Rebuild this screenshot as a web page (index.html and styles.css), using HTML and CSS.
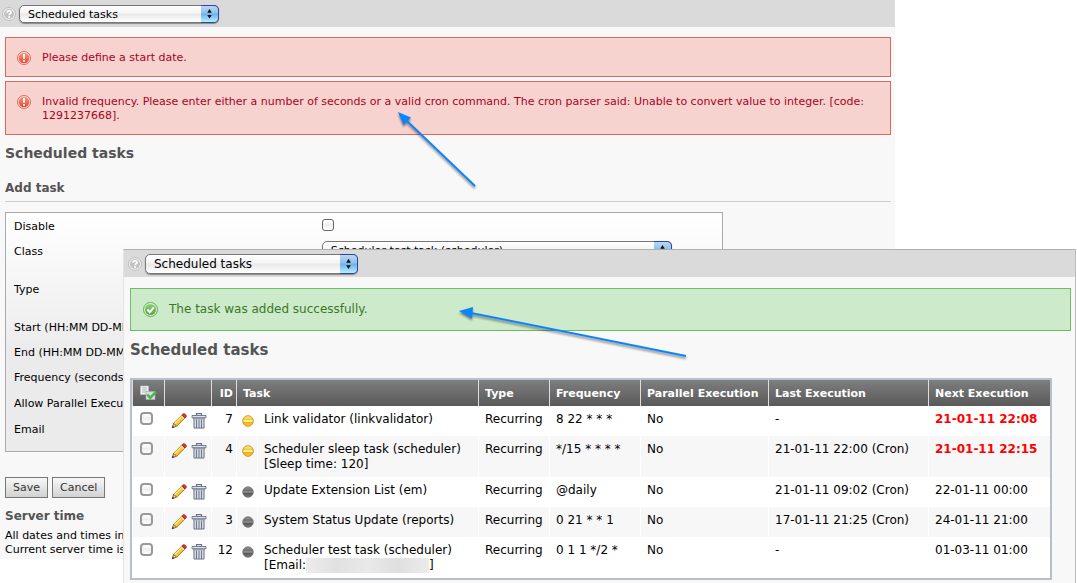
FILE: index.html
```html
<!DOCTYPE html>
<html lang="en">
<head>
<meta charset="utf-8">
<title>Scheduled tasks</title>
<link rel="stylesheet" href="styles.css">
</head>
<body>
<svg class="defs" width="0" height="0" aria-hidden="true">
  <defs>
    <linearGradient id="gRed" x1="0" y1="0" x2="0" y2="1"><stop offset="0" stop-color="#f59a86"/><stop offset="1" stop-color="#e04a34"/></linearGradient>
    <linearGradient id="gGreen" x1="0" y1="0" x2="0" y2="1"><stop offset="0" stop-color="#8fd07c"/><stop offset="1" stop-color="#4ea83c"/></linearGradient>
    <linearGradient id="gGold" x1="0" y1="0" x2="0" y2="1"><stop offset="0" stop-color="#fff08a"/><stop offset=".4" stop-color="#f6c52c"/><stop offset=".48" stop-color="#fff6c0"/><stop offset=".56" stop-color="#fff0a0"/><stop offset=".62" stop-color="#eeb010"/><stop offset="1" stop-color="#f8d232"/></linearGradient>
    <linearGradient id="gDark" x1="0" y1="0" x2="0" y2="1"><stop offset="0" stop-color="#8e8e8e"/><stop offset=".4" stop-color="#707070"/><stop offset=".5" stop-color="#a2a2a2"/><stop offset=".6" stop-color="#585858"/><stop offset="1" stop-color="#7a7a7a"/></linearGradient>
    <symbol id="help" viewBox="0 0 14 14"><circle cx="7" cy="7" r="6.4" fill="#f6f6f6" stroke="#b4b4b4" stroke-width=".9"/><circle cx="7" cy="7" r="5" fill="#c2c2c2"/><path d="M4.900 5.600C5 3.100 9.200 3.300 9 5.600 8.900 6.900 7.100 6.700 7.100 8.300" fill="none" stroke="#fff" stroke-width="1.700"/><circle cx="7.100" cy="10.100" r="1" fill="#fff"/></symbol>
    <symbol id="error" viewBox="0 0 14 14"><circle cx="7" cy="7" r="6.5" fill="#fbe3dd" stroke="#df5c48" stroke-width=".9"/><circle cx="7" cy="7" r="5.3" fill="url(#gRed)"/><path d="M6.1 3h1.8v4.7H6.1zM6.1 9h1.8v1.7H6.1z" fill="#fff"/></symbol>
    <symbol id="ok" viewBox="0 0 15 15"><circle cx="7.5" cy="7.5" r="7" fill="#e4f6de" stroke="#5aae48"/><circle cx="7.5" cy="7.5" r="5.6" fill="url(#gGreen)"/><path d="M4.3 7.5l2.5 2.7 4-4.9" fill="none" stroke="#fff" stroke-width="2"/></symbol>
    <symbol id="steps" viewBox="0 0 18 18"><path d="M9 3.4l2.5 4.2h-5zM9 14.2l2.5-4h-5z" fill="#111"/></symbol>
    <symbol id="pencil" viewBox="0 0 16 16"><path d="M1.2 14.8l1.5-4.6 2.9 3z" fill="#f2cfa0" stroke="#4c3414" stroke-width=".7"/><path d="M1.2 14.8l.6-2 1.3 1.4z" fill="#111"/><path d="M2.7 10.2L10.9 2l3.1 3-8.3 8.2z" fill="#f8c631" stroke="#96670c" stroke-width=".8"/><path d="M3.6 10.5l8-7.9" stroke="#ffec98" stroke-width="1.2"/><path d="M10 2.9l3.1 3" stroke="#e8e2d2" stroke-width="1.2"/><path d="M10.9 2l1.3-1.2c1.3-.8 3.8 1.4 3 3L14 5z" fill="#dd3828" stroke="#8f1c12" stroke-width=".7"/></symbol>
    <symbol id="trash" viewBox="0 0 16 16"><path d="M5.5 2.5V.7h5v1.8" fill="none" stroke="#697386" stroke-width="1.2"/><path d="M1 2.5h14v2.2H1z" fill="#dbe1ec" stroke="#697386" stroke-width=".9"/><path d="M2.5 6h11v9.3h-11z" fill="#d3d9e3"/><path d="M1.8 5.7h12.4" stroke="#697386" stroke-width=".8"/><path d="M3 6v9h10V6M5.5 6.5V15M8 6.5V15M10.5 6.5V15" fill="none" stroke="#70798c"/></symbol>
    <symbol id="gold" viewBox="0 0 12 12"><circle cx="6" cy="6" r="5.3" fill="url(#gGold)" stroke="#c88b12" stroke-width=".9"/></symbol>
    <symbol id="dark" viewBox="0 0 12 12"><circle cx="6" cy="6" r="5.3" fill="url(#gDark)" stroke="#686868" stroke-width=".7"/></symbol>
    <symbol id="select-all" viewBox="0 0 17 16"><path d="M.5 1h8v8.500h-8z" fill="#f3f5f7" stroke="#b9bfc6" stroke-width=".6"/><path d="M2 3h5M2 5h5M2 7h5" stroke="#9ba3ac" stroke-width=".8"/><path d="M6 6.500h9v8H6z" fill="#d5e2da" stroke="#a5adb3" stroke-width=".7"/><path d="M7.300 9.500l2.900 3.300 5.800-6" fill="none" stroke="#4fb34a" stroke-width="2.500"/></symbol>
  </defs>
</svg>

<main class="stage">
  <section class="window window-back">
    <header class="bar">
      <svg class="icon-help"><use href="#help"/></svg>
      <span class="picker"><select aria-label="Module"><option>Scheduled tasks</option></select><svg class="steps"><use href="#steps"/></svg></span>
    </header>
    <div class="content">
      <div class="messages">
        <div class="message error"><svg class="icon-msg"><use href="#error"/></svg><p>Please define a start date.</p></div>
        <div class="message error"><svg class="icon-msg"><use href="#error"/></svg><p>Invalid frequency. Please enter either a number of seconds or a valid cron command. The cron parser said: Unable to convert value to integer. [code: 1291237668].</p></div>
      </div>
      <h1>Scheduled tasks</h1>
      <h2 class="ruled">Add task</h2>
      <form class="task-form">
        <div class="field"><label for="disable">Disable</label><input class="tick" id="disable" type="checkbox"></div>
        <div class="field"><label for="class">Class</label><span class="picker wide"><select id="class"><option>Scheduler test task (scheduler)</option></select><svg class="steps"><use href="#steps"/></svg></span></div>
        <div class="field double"><span>Type</span></div>
        <div class="field"><span>Start (HH:MM DD-MM</span></div>
        <div class="field"><span>End (HH:MM DD-MM</span></div>
        <div class="field roomy"><span>Frequency (seconds</span></div>
        <div class="field roomy"><span>Allow Parallel Execu</span></div>
        <div class="field roomy"><span>Email</span></div>
      </form>
      <div class="actions"><button type="button">Save</button><button type="button">Cancel</button></div>
      <h2>Server time</h2>
      <p>All dates and times in<br>Current server time is</p>
    </div>
    <svg class="arrow arrow-error" viewBox="0 0 90 86"><path d="M15 15L83 80" stroke="#0a84ff" stroke-width="2"/><path d="M6 6l13 5.500-7.500 7.500z" fill="#0a84ff"/></svg>
  </section>

  <section class="window window-front">
    <header class="bar">
      <svg class="icon-help"><use href="#help"/></svg>
      <span class="picker"><select aria-label="Module"><option>Scheduled tasks</option></select><svg class="steps"><use href="#steps"/></svg></span>
    </header>
    <div class="content">
      <div class="message success"><svg class="icon-msg"><use href="#ok"/></svg><p>The task was added successfully.</p></div>
      <h1>Scheduled tasks</h1>
      <table class="tasks">
        <colgroup><col class="c-check"><col class="c-tools"><col class="c-id"><col class="c-state"><col><col class="c-type"><col class="c-freq"><col class="c-par"><col class="c-last"><col class="c-next"></colgroup>
        <thead>
          <tr><th class="mark"><svg class="icon-all"><use href="#select-all"/></svg></th><th></th><th class="num">ID</th><th colspan="2">Task</th><th>Type</th><th>Frequency</th><th>Parallel Execution</th><th>Last Execution</th><th>Next Execution</th></tr>
        </thead>
        <tbody>
          <tr><td class="mark"><input class="tick" type="checkbox" aria-label="Task 7"></td><td class="tools"><svg><use href="#pencil"/></svg><svg><use href="#trash"/></svg></td><td class="num">7</td><td class="state"><svg><use href="#gold"/></svg></td><td>Link validator (linkvalidator)</td><td>Recurring</td><td>8 22 * * *</td><td>No</td><td>-</td><td class="late">21-01-11 22:08</td></tr>
          <tr><td class="mark"><input class="tick" type="checkbox" aria-label="Task 4"></td><td class="tools"><svg><use href="#pencil"/></svg><svg><use href="#trash"/></svg></td><td class="num">4</td><td class="state"><svg><use href="#gold"/></svg></td><td>Scheduler sleep task (scheduler)<br>[Sleep time: 120]</td><td>Recurring</td><td>*/15 * * * *</td><td>No</td><td>21-01-11 22:00 (Cron)</td><td class="late">21-01-11 22:15</td></tr>
          <tr><td class="mark"><input class="tick" type="checkbox" aria-label="Task 2"></td><td class="tools"><svg><use href="#pencil"/></svg><svg><use href="#trash"/></svg></td><td class="num">2</td><td class="state"><svg><use href="#dark"/></svg></td><td>Update Extension List (em)</td><td>Recurring</td><td>@daily</td><td>No</td><td>21-01-11 09:02 (Cron)</td><td>22-01-11 00:00</td></tr>
          <tr><td class="mark"><input class="tick" type="checkbox" aria-label="Task 3"></td><td class="tools"><svg><use href="#pencil"/></svg><svg><use href="#trash"/></svg></td><td class="num">3</td><td class="state"><svg><use href="#dark"/></svg></td><td>System Status Update (reports)</td><td>Recurring</td><td>0 21 * * 1</td><td>No</td><td>17-01-11 21:25 (Cron)</td><td>24-01-11 21:00</td></tr>
          <tr><td class="mark"><input class="tick" type="checkbox" aria-label="Task 12"></td><td class="tools"><svg><use href="#pencil"/></svg><svg><use href="#trash"/></svg></td><td class="num">12</td><td class="state"><svg><use href="#dark"/></svg></td><td>Scheduler test task (scheduler)<br>[Email:<span class="redacted"></span>]</td><td>Recurring</td><td>0 1 1 */2 *</td><td>No</td><td>-</td><td>01-03-11 01:00</td></tr>
        </tbody>
      </table>
    </div>
    <svg class="arrow arrow-success" viewBox="0 0 240 66"><path d="M18 13L233 56" stroke="#0a84ff" stroke-width="2"/><path d="M6 11l14-4-1 11.500z" fill="#0a84ff"/></svg>
  </section>
</main>
</body>
</html>
```
FILE: styles.css
```css
* { box-sizing: border-box; }
body { margin: 0; background: #fff; color: #000; font-family: "DejaVu Sans", sans-serif; }
h1, h2, p { margin: 0; }
h1, h2 { color: #545454; }
svg { display: block; flex: none; }
.defs { position: absolute; }
.stage { position: relative; overflow: hidden; min-height: 100vh; }
.window { background: #f8f8f8; }
.bar { display: flex; align-items: center; background: #dadada; }

/* Back window */
.window-back { position: relative; width: 83.1%; font-size: 11px; line-height: 14px; }
.window-back .bar { height: 27px; padding: 1px 2px 0; gap: 3px; }
.window-back .content { padding: 10px 4px 2px 5px; }
.icon-help { width: 14px; height: 14px; }
.window-back h1 { margin-top: 9px; font-size: 14px; line-height: 18px; }
.window-back h2 { font-size: 12px; line-height: 16px; }
.window-back .ruled { margin-top: 18px; padding-bottom: 5px; border-bottom: 1px solid #ccc; }

.picker { position: relative; display: block; width: 200px; height: 18px; }
.picker select {
  appearance: none; display: block; width: 100%; height: 100%; margin: 0; padding: 2px 20px 0 8px;
  border: 1px solid #777; border-radius: 5px; color: #000; font: inherit;
  background: linear-gradient(#fff, #f4f4f4 45%, #e8e8e8 50%, #fff);
  box-shadow: 0 1px 1px #888;
}
.steps {
  position: absolute; top: 0; right: 0; width: 18px; height: 100%;
  border: 1px solid #31459b; border-left: 0; border-radius: 0 5px 5px 0; pointer-events: none;
  background: linear-gradient(#bcd7f3, #8dc0ef 45%, #69b0ec 50%, #b5f0ff);
}
.picker.wide { width: 350px; }

.messages { display: flex; flex-direction: column; gap: 4px; }
.message { display: flex; align-items: flex-start; }
.message p { flex: 1; }
.error { gap: 11px; padding: 13px 11px 11px; border: 1px solid #d8695f; background: #f6d3cf; color: #aa0225; }
.error .icon-msg { width: 14px; height: 14px; }

.task-form { width: 81%; margin-top: 10px; padding: 1px 8px 8px; border: 1px solid #aaa; background: linear-gradient(#fff, #ebebeb 60%); }
.field { display: grid; grid-template-columns: 44% 1fr; align-items: center; min-height: 25px; }
.field .tick, .field .picker { margin-bottom: 4px; }
.field.double { min-height: 51px; }
.field.roomy { min-height: 26px; }
.tick {
  appearance: none; display: block; width: 12px; height: 12px; margin: 0;
  border: 1px solid #666; border-radius: 3px; background: linear-gradient(#fff, #eee 50%, #fff);
}
.actions { display: flex; gap: 4px; margin: 25px 0 10px; }
.actions button {
  height: 21px; padding: 0 7px; border: 1px solid #777; color: #333;
  font: inherit; background: linear-gradient(#f8f8f8, #d2d2d2);
}
.window-back h2 + p { margin-top: 5px; }

/* Front window */
.window-front {
  position: absolute; top: 249px; left: 123px; right: 1px;
  border: 1px solid #e4e4e4; border-top-color: #b0b0b0; border-right-color: #bbb;
  font-size: 12px; line-height: 15px;
}
.window-front .bar { height: 27px; padding: 0 4px; gap: 3px; }
.window-front .picker { width: 213px; height: 20px; }
.window-front .content { padding: 11px 4px 3px 6px; }
.success { gap: 11px; padding: 13px 12px; border: 1px solid #6fbd63; background: #cdeaca; color: #3b7826; }
.success .icon-msg { width: 15px; height: 15px; }
.window-front h1 { margin: 9px 0 18px; font-size: 15px; line-height: 20px; }

.tasks { width: calc(100% - 19px); table-layout: fixed; border-collapse: separate; border-spacing: 0; border: 2px solid #b9bfca; background: #fff; }
.c-check { width: 32px; } .c-tools { width: 47px; } .c-id { width: 25px; } .c-state { width: 21px; }
.c-type { width: 71px; } .c-freq { width: 91px; } .c-par { width: 128px; } .c-last { width: 160px; } .c-next { width: 122px; }
.tasks th {
  height: 26px; padding: 0 0 0 6px; border-left: 1px solid #ddd;
  background: linear-gradient(#7e7e7e, #595959); color: #fff; font-size: 11px; text-align: left; white-space: nowrap;
}
.tasks td { height: 30px; padding: 6px 0 5px 6px; border-left: 1px solid #fff; vertical-align: top; white-space: nowrap; }
.tasks tbody tr:nth-child(even) { background: #f7f7f7; }
.tasks th.num, .tasks td.num { padding-left: 0; padding-right: 3px; text-align: right; }
.tasks .mark { padding-left: 7px; }
.tasks .mark .tick { width: 13px; height: 13px; border: 2px solid #999; border-radius: 4px; }
.icon-all { width: 17px; height: 16px; }
.tools svg { display: inline-block; width: 16px; height: 16px; margin-right: 4px; vertical-align: top; }
.tasks td.tools { padding: 7px 0 0 6px; font-size: 0; }
.tasks td.state { padding: 9px 0 0 5px; }
.state svg { width: 12px; height: 12px; }
.tasks .late { color: #f00; font-weight: bold; }
.redacted { display: inline-block; width: 123px; height: 15px; vertical-align: top; background: linear-gradient(90deg, #ececec, #e1e1e1 25%, #e9e9e9 50%, #dfdfdf 75%, #ececec); }

/* Callout arrows drawn over the windows */
.arrow { position: absolute; fill: none; overflow: visible; filter: drop-shadow(0 2px 1px rgba(0, 0, 0, .45)); }
.arrow-error { top: 106px; left: 392px; width: 90px; height: 86px; }
.arrow-success { top: 50px; left: 329px; width: 240px; height: 66px; }
```
